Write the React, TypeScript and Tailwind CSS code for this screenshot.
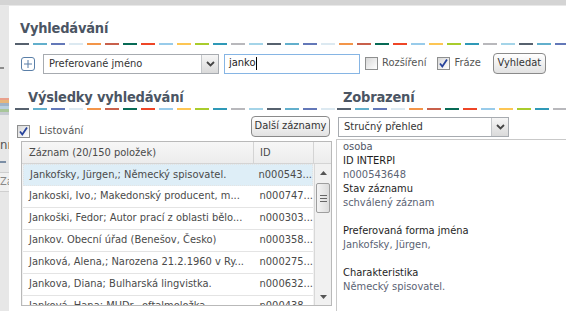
import { ReactNode } from 'react'

const DASH = [
  'bg-[#56616e]',
  'bg-[#62afcc]',
  'bg-[#6378b8]',
  'bg-[#dce9f1]',
  'bg-[#f39549]',
  'bg-[#c8604b]',
  'bg-[#076a55]',
  'bg-[#ee4526]',
  'bg-[#98cbea]',
  'bg-[#fdc654]',
  'bg-[#a9cc2c]',
  'bg-[#2f99b7]',
  'bg-[#b8b8bc]',
  'bg-[#a4d4e8]',
]

const ROWS = [
  ['Jankofsky, Jürgen,; Německý spisovatel.', 'n000543...'],
  ['Jankoski, Ivo,; Makedonský producent, m...', 'n000747...'],
  ['Jankoški, Fedor; Autor prací z oblasti bělo...', 'n000303...'],
  ['Jankov. Obecní úřad (Benešov, Česko)', 'n000358...'],
  ['Janková, Alena,; Narozena 21.2.1960 v Ry...', 'n000275...'],
  ['Jankova, Diana; Bulharská lingvistka.', 'n000632...'],
  ['Janková, Hana; MUDr., oftalmoložka.', 'n000438...'],
]

function Dashes({ count, className = '' }: { count: number; className?: string }) {
  return (
    <div className={`flex h-[2px] gap-[4px] overflow-hidden ${className}`}>
      {Array.from({ length: count }).map((_, i) => (
        <span key={i} className={`h-[2px] w-[14px] shrink-0 ${DASH[i % DASH.length]}`} />
      ))}
    </div>
  )
}

function Heading({ children, className = '' }: { children: ReactNode; className?: string }) {
  return (
    <h2 className={`h-[18px] text-[14.5px] leading-[18px] font-bold tracking-[-0.2px] text-[#4b5563] ${className}`}>
      {children}
    </h2>
  )
}

function Checkbox({ checked }: { checked?: boolean }) {
  return (
    <span className="relative inline-block h-[13px] w-[13px] shrink-0 border border-[#8e8f8f] bg-gradient-to-br from-[#d8d8d8] to-white">
      {checked && (
        <svg viewBox="0 0 13 13" className="absolute -top-px -left-px h-[13px] w-[13px]">
          <path d="M3 6.5 L5.3 9.5 L10 2.5" fill="none" stroke="#26429b" strokeWidth="1.8" />
        </svg>
      )}
    </span>
  )
}

function Select({ value, className = '' }: { value: string; className?: string }) {
  return (
    <div className={`flex h-[20px] border border-[#a7abb0] bg-white ${className}`}>
      <span className="flex-1 truncate pl-[5px] leading-[18px] text-[#333]">{value}</span>
      <span className="flex w-[17px] items-center justify-center border-l border-[#c4c7ca] bg-gradient-to-b from-[#f6f6f6] to-[#dadada]">
        <svg viewBox="0 0 9 6" className="h-[6px] w-[9px]">
          <path d="M1 1 L4.5 4.5 L8 1" fill="none" stroke="#444" strokeWidth="1.8" />
        </svg>
      </span>
    </div>
  )
}

function Button({ children, className = '' }: { children: ReactNode; className?: string }) {
  return (
    <button
      className={`flex h-[21px] items-center justify-center rounded-[4px] border border-[#8a8a8a] bg-gradient-to-b from-white to-[#e2e2e2] text-[11px] text-[#333] ${className}`}
    >
      {children}
    </button>
  )
}

function Scrollbar() {
  return (
    <div className="flex w-[17px] shrink-0 flex-col border-l border-[#d8d8d8] bg-[#f1f1f1]">
      <div className="flex h-[17px] items-center justify-center">
        <svg viewBox="0 0 7 4" className="h-[4px] w-[7px]">
          <path d="M0 4 L3.5 0 L7 4Z" fill="#555" />
        </svg>
      </div>
      <div className="mx-[1px] mt-[2px] flex h-[30px] flex-col items-center justify-center gap-[2px] rounded-[2px] border border-[#9e9e9e] bg-gradient-to-r from-[#f4f4f4] to-[#dcdcdc]">
        <span className="h-px w-[7px] bg-[#666]" />
        <span className="h-px w-[7px] bg-[#666]" />
        <span className="h-px w-[7px] bg-[#666]" />
      </div>
      <div className="flex-1" />
      <div className="flex h-[17px] items-center justify-center">
        <svg viewBox="0 0 7 4" className="h-[4px] w-[7px]">
          <path d="M0 0 L3.5 4 L7 0Z" fill="#555" />
        </svg>
      </div>
    </div>
  )
}

export default function App() {
  return (
    <div className="flex h-[311px] w-[566px] flex-col overflow-hidden bg-white font-['DejaVu_Sans_Condensed','Liberation_Sans',sans-serif] text-[11px] text-[#444]">
      <div className="h-[6px] shrink-0 border-b border-[#e8e8e8] bg-[#d4d4d4]" />
      <div className="flex min-h-0 flex-1">
        {/* background page peeking out */}
        <aside className="flex w-[9px] shrink-0 flex-col overflow-hidden bg-[#e7e7e7]">
          <span className="mt-[61px] h-[2px] w-[4px] bg-[#8c8c8c]" />
          <div className="mt-[29px] flex flex-col">
            <span className="h-[2px] bg-[#e9a08c]" />
            <span className="h-[3px] bg-[#e6b57a]" />
            <span className="h-[3px] bg-[#9fb3c8]" />
            <span className="h-[3px] bg-[#b8cfe0]" />
            <span className="h-[3px] bg-[#a8c69a]" />
            <span className="h-[3px] bg-[#c7cbd2]" />
          </div>
          <span className="mt-[24px] h-[12px] text-[13px] leading-[12px] text-[#555]">nn</span>
          <span className="mt-[10px] h-[2px] w-[6px] bg-[#7c8ea5]" />
          <span className="mt-[9px] h-[20px] border-y border-[#cfcfcf] bg-[#f0f0f0] text-[11px] leading-[18px] text-[#888]">Za</span>
        </aside>

        <main className="flex min-w-0 flex-1 flex-col">
          <Heading className="mt-[13px] pl-[11px]">Vyhledávání</Heading>
          <Dashes count={31} className="mt-[6px] ml-[6px]" />

          <div className="mt-[8px] flex h-[21px] items-center pl-[12px]">
            <span className="flex h-[14px] w-[14px] items-center justify-center rounded-[3px] border border-[#5a7fa8]">
              <svg viewBox="0 0 10 10" className="h-[10px] w-[10px]">
                <path d="M5 1 V9 M1 5 H9" stroke="#5a7fa8" strokeWidth="1" />
              </svg>
            </span>
            <Select value="Preferované jméno" className="ml-[8px] w-[176px]" />
            <div className="ml-[5px] flex h-[20px] w-[136px] items-center border border-[#86b5e4] bg-white pl-[4px] text-[#222]">
              janko<span className="ml-px h-[13px] w-px bg-black" />
            </div>
            <span className="ml-[5px] flex items-center gap-[4px]">
              <Checkbox />
              <span className="text-[#555]">Rozšíření</span>
            </span>
            <span className="ml-[11px] flex items-center gap-[4px]">
              <Checkbox checked />
              <span className="text-[#555]">Fráze</span>
            </span>
            <Button className="ml-[12px] w-[53px] self-start">Vyhledat</Button>
          </div>

          <div className="flex min-h-0 flex-1">
            {/* results */}
            <section className="ml-[6px] flex w-[321px] shrink-0 flex-col overflow-hidden">
              <Heading className="mt-[14px] pl-[13px]">Výsledky vyhledávání</Heading>
              <Dashes count={18} className="mt-[2px]" />
              <div className="mt-[6px] flex h-[21px] items-start justify-between pr-[6px]">
                <span className="mt-[7px] flex items-center gap-[9px] pl-[2px]">
                  <Checkbox checked />
                  <span className="text-[#555]">Listování</span>
                </span>
                <Button className="w-[79px]">Další záznamy</Button>
              </div>

              <div className="mt-[4px] ml-[6px] flex h-[165px] w-[311px] flex-col overflow-hidden border border-[#b9b9b9] bg-[#f2f2f2]">
                <div className="flex h-[22px] shrink-0 border-b border-[#d4d4d4] bg-gradient-to-b from-[#f7f7f7] to-[#ececec] leading-[21px] text-[#4a4a4a]">
                  <span className="w-[231px] pl-[7px]">Záznam (20/150 položek)</span>
                  <span className="w-[60px] border-l border-[#d4d4d4] pl-[6px]">ID</span>
                  <span className="flex-1 border-l border-[#d4d4d4]" />
                </div>
                <div className="flex min-h-0 flex-1">
                  <div className="flex min-w-0 flex-1 flex-col px-[1px]">
                    {ROWS.map(([name, id], i) => (
                      <div
                        key={id}
                        className={`flex h-[22px] shrink-0 items-center whitespace-nowrap border-b border-[#e4e4e4] text-[#4a4a4a] ${
                          i === 0 ? 'border border-dotted border-[#9db8cc] bg-[#deeef7]' : 'bg-white'
                        }`}
                      >
                        <span className="w-[230px] truncate pl-[6px]">{name}</span>
                        <span className="pl-[7px]">{id}</span>
                      </div>
                    ))}
                  </div>
                  <Scrollbar />
                </div>
              </div>
            </section>

            {/* detail */}
            <section className="flex min-w-0 flex-1 flex-col">
              <Heading className="mt-[14px] pl-[7px]">Zobrazení</Heading>
              <Dashes count={13} className="mt-[2px] ml-[1px]" />
              <Select value="Stručný přehled" className="mt-[7px] ml-[2px] w-[171px]" />
              <div className="mt-[2px] flex-1 border-t border-l border-[#c9c9c9] pl-[6px] leading-[14px]">
                <p className="text-[#4f5666]">osoba</p>
                <p className="text-[#1e1e1e]">ID INTERPI</p>
                <p className="text-[#5b6374]">n000543648</p>
                <p className="text-[#1e1e1e]">Stav záznamu</p>
                <p className="text-[#5b6374]">schválený záznam</p>
                <p className="mt-[14px] text-[#1e1e1e]">Preferovaná forma jména</p>
                <p className="text-[#5b6374]">Jankofsky, Jürgen,</p>
                <p className="mt-[14px] text-[#1e1e1e]">Charakteristika</p>
                <p className="text-[#5b6374]">Německý spisovatel.</p>
              </div>
            </section>
          </div>
        </main>
      </div>
    </div>
  )
}
